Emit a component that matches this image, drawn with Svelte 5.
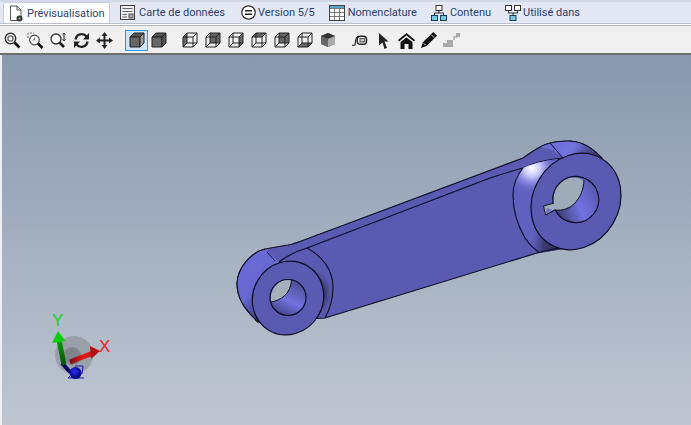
<script>
  // tabs along the top, labels in the order shown
  const tabs = [
    { id: 'preview', label: 'Prévisualisation', active: true },
    { id: 'card', label: 'Carte de données' },
    { id: 'version', label: 'Version 5/5' },
    { id: 'bom', label: 'Nomenclature' },
    { id: 'content', label: 'Contenu' },
    { id: 'used', label: 'Utilisé dans' }
  ];

  // shaded face of each wireframe view cube
  const wireCubes = [
    'M1 5 5 1 5 11 1 15Z',
    'M5 1H15V11H5Z',
    'M11 5 15 1 15 11 11 15Z',
    'M1 5 5 1H15L11 5Z',
    'M5 1H15V11H5Z',
    'M5 11H15L11 15H1Z'
  ];

  const leftCrescent = 'M307 248C322 256 333 270 333 287 333 298 330 309 325 318L300 332 279 262C287 256 296 251 307 248Z';
  const rightCrescent = 'M523 168C515 178 513 186 513 195 513 212 518 226 525 238 529 244 534 249 540 253L575 247 575 158C555 158 536 162 523 168Z';
</script>

{#snippet tabIcon(id)}
  {#if id === 'preview'}
    <svg width="14" height="17" viewBox="0 0 14 17">
      <path d="M1.5 1H8L12 5V15.5H1.5Z" fill="#fff" stroke="#555" />
      <path d="M8 1V5H12" fill="none" stroke="#555" />
      <circle cx="10.5" cy="13.5" r="3" fill="#333" />
      <circle cx="10.5" cy="13.5" r="1" fill="#bbb" />
    </svg>
  {:else if id === 'card'}
    <svg width="15" height="15" viewBox="0 0 15 15">
      <rect x=".5" y=".5" width="14" height="14" fill="#eef0f4" stroke="#444" />
      <path d="M2.500 3.500H12.500M2.500 6.500H12.500M2.500 9.500H7M2.500 12H7" stroke="#666" />
      <rect x="9" y="9" width="4" height="4" fill="#aaa" stroke="#555" />
    </svg>
  {:else if id === 'version'}
    <svg width="15" height="15" viewBox="0 0 15 15">
      <circle cx="7.5" cy="7.5" r="6.7" fill="#fff" stroke="#333" stroke-width="1.3" />
      <path d="M4 5.800H11M4 9.200H11" stroke="#222" stroke-width="1.5" />
    </svg>
  {:else if id === 'bom'}
    <svg width="16" height="16" viewBox="0 0 16 16">
      <rect x=".5" y=".5" width="15" height="15" fill="#fff" stroke="#444" />
      <rect x="1" y="1" width="14" height="2.5" fill="#5ba3cf" />
      <path d="M1 7.500H15M1 11.500H15M5.500 3.500V15M10.500 3.500V15M1 3.500H15" stroke="#777" />
    </svg>
  {:else if id === 'content'}
    <svg width="16" height="16" viewBox="0 0 16 16">
      <rect x="5" y=".5" width="6" height="5" fill="#fff" stroke="#333" />
      <rect x=".5" y="10.5" width="6" height="5" fill="#7cc4e4" stroke="#12405f" />
      <rect x="9.5" y="10.5" width="6" height="5" fill="#7cc4e4" stroke="#12405f" />
      <path d="M8 5.500V8M3.500 10.500V8H12.500V10.500" fill="none" stroke="#333" />
    </svg>
  {:else}
    <svg width="16" height="16" viewBox="0 0 16 16">
      <rect x=".5" y=".5" width="6" height="5" fill="#fff" stroke="#333" />
      <rect x="9.5" y=".5" width="6" height="5" fill="#fff" stroke="#333" />
      <rect x="5" y="10.5" width="6" height="5" fill="#7cc4e4" stroke="#12405f" />
      <path d="M3.500 5.500V8H12.500V5.500M8 8V10.500" fill="none" stroke="#333" />
    </svg>
  {/if}
{/snippet}

{#snippet solidCube(side)}
  <svg width="16" height="16" viewBox="0 0 16 16">
    <path d="M1 5 5 1H15L11 5Z" fill="#555" stroke="#222" stroke-linejoin="round" />
    <path d="M1 5H11V15H1Z" fill="#666" stroke="#222" stroke-linejoin="round" />
    <path d="M11 5 15 1V11L11 15Z" fill={side} stroke="#222" stroke-linejoin="round" />
  </svg>
{/snippet}

<div class="window">
  <nav class="tabs">
    {#each tabs as tab}
      <div class="tab {tab.id}" class:active={tab.active}>
        {@render tabIcon(tab.id)}
        <span>{tab.label}</span>
      </div>
    {/each}
  </nav>

  <div class="toolbar">
    <div class="group view-tools">
      <svg width="17" height="17" viewBox="0 0 17 17">
        <circle cx="6.5" cy="6.5" r="5.2" fill="#fff" stroke="#333" stroke-width="1.4" />
        <circle cx="6.5" cy="6.5" r="2.6" fill="none" stroke="#666" stroke-width="1.4" />
        <path d="M10.500 10.500 15.500 15.500" stroke="#111" stroke-width="2.6" />
      </svg>
      <svg width="17" height="17" viewBox="0 0 17 17">
        <path d="M1 6V1H7" fill="none" stroke="#666" stroke-dasharray="2 1.4" />
        <circle cx="7.5" cy="8" r="4.8" fill="#fff" stroke="#444" stroke-width="1.2" />
        <path d="M7.500 5.500V8H5.500" fill="none" stroke="#777" />
        <path d="M11 11.500 15.500 16" stroke="#111" stroke-width="2.6" />
      </svg>
      <svg width="17" height="17" viewBox="0 0 17 17">
        <circle cx="6" cy="7" r="5" fill="#fff" stroke="#333" stroke-width="1.3" />
        <path d="M9.700 10.700 14 15" stroke="#111" stroke-width="2.6" />
        <path d="M14 1V9M12.600 2.800 14 1 15.400 2.800M12.600 7.200 14 9 15.400 7.200" fill="none" stroke="#333" />
      </svg>
      <svg width="17" height="17" viewBox="0 0 17 17">
        <path d="M2.500 7.500A6.200 6.200 0 0 1 13.500 4.500" fill="none" stroke="#222" stroke-width="2.3" />
        <path d="M14.500 9.500A6.200 6.200 0 0 1 3.500 12.500" fill="none" stroke="#222" stroke-width="2.3" />
        <path d="M16 1V7.500H10ZM1 16V9.500H7Z" fill="#222" />
      </svg>
      <svg width="17" height="17" viewBox="0 0 17 17">
        <path d="M8.500 2V15M2 8.500H15" stroke="#222" stroke-width="2" />
        <path d="M8.500 0 11.500 4H5.500ZM8.500 17 5.500 13H11.500ZM0 8.500 4 5.500V11.500ZM17 8.500 13 11.500V5.500Z" fill="#222" />
      </svg>
    </div>

    <div class="selected">{@render solidCube('#999')}</div>
    <div class="second-cube">{@render solidCube('#555')}</div>

    <div class="group cubes">
      {#each wireCubes as face}
        <svg width="16" height="16" viewBox="0 0 16 16">
          <path d={face} fill="#666" />
          <path
            d="M1 5 5 1H15V11L11 15H1ZM1 5H11V15M11 5 15 1M5 1V11M5 11 1 15M5 11H15"
            fill="none"
            stroke="#222"
            stroke-linejoin="round"
          />
        </svg>
      {/each}
      <svg width="16" height="16" viewBox="0 0 16 16">
        <path d="M8 1 15 4V12L8 15 1 12V4Z" fill="#555" />
        <path d="M1 4 8 1 15 4 8 7Z" fill="#333" />
        <path d="M8 7 15 4V12L8 15Z" fill="#aaa" />
        <path d="M1 4 8 7V15L1 12Z" fill="#666" />
      </svg>
    </div>

    <div class="group misc-tools">
      <svg class="tape" width="16" height="15" viewBox="0 0 17 16">
        <rect x="5.500" y="3.500" width="10" height="8.500" rx="3.500" fill="none" stroke="#222" stroke-width="1.500" />
        <rect x="8.500" y="6" width="5" height="3.500" fill="#ccc" stroke="#444" />
        <path d="M7 3.500C3 4 4 11 3 13H0" fill="none" stroke="#222" stroke-width="1.200" />
      </svg>
      <svg class="arrow" width="11" height="17" viewBox="0 0 11 17">
        <path d="M1 1 10.500 9.500H6.500L9 16 6.500 17 4.500 10.500 1 13.500Z" fill="#222" />
      </svg>
      <svg class="home" width="17" height="17" viewBox="0 0 17 17">
        <path d="M0 8 8.500 1 17 8 16 9.500 8.500 3.500 1 9.500Z" fill="#111" />
        <path d="M2.500 10 8.500 5.500 14.500 10V17H10.500V12H6.500V17H2.500Z" fill="#111" />
      </svg>
      <svg class="pencil" width="16" height="16" viewBox="0 0 17 17">
        <path d="M13 0 17 4 6 15 0 17 2 11Z" fill="#111" />
        <path d="M11 3 14 6M3 12 5 14" stroke="#f0f0f0" />
      </svg>
      <svg class="steps" width="17" height="14" viewBox="0 0 17 14">
        <path d="M0 14V10H4V7H10V14Z" fill="#aaa" />
        <path d="M11 7V4H14" fill="none" stroke="#aaa" stroke-width="1.300" />
        <rect x="13" y="0" width="4" height="4" fill="#aaa" />
      </svg>
    </div>
  </div>

  <main class="viewport">
    <svg class="scene" width="689" height="370" viewBox="2 55 689 370">
      <defs>
        <linearGradient id="leftBoss" x1="0" y1="0" x2=".55" y2="1">
          <stop offset="0" stop-color="#6d6dd8" />
          <stop offset=".6" stop-color="#6767d0" />
          <stop offset="1" stop-color="#363670" />
        </linearGradient>
        <radialGradient id="leftShade" gradientUnits="userSpaceOnUse" cx="308" cy="294" r="27">
          <stop offset="0" stop-color="#2c2c52" />
          <stop offset=".6" stop-color="#34345f" />
          <stop offset="1" stop-color="#5a5ab2" stop-opacity="0" />
        </radialGradient>
        <radialGradient id="rightGlow" gradientUnits="userSpaceOnUse" cx="532" cy="168" r="24">
          <stop offset="0" stop-color="#fff" />
          <stop offset=".35" stop-color="#c8c8fa" />
          <stop offset="1" stop-color="#7a7ae4" stop-opacity="0" />
        </radialGradient>
        <radialGradient id="rightShade" gradientUnits="userSpaceOnUse" cx="558" cy="246" r="30">
          <stop offset="0" stop-color="#2a2a50" />
          <stop offset=".5" stop-color="#3c3c74" />
          <stop offset="1" stop-color="#5a5ab2" stop-opacity="0" />
        </radialGradient>
        <linearGradient id="topCyl" x1="0" y1="0" x2="1" y2=".3">
          <stop offset="0" stop-color="#6a6ad2" />
          <stop offset=".55" stop-color="#7474e0" />
          <stop offset="1" stop-color="#30305c" />
        </linearGradient>
        <linearGradient id="smallBore" x1=".2" y1="1" x2=".7" y2="0">
          <stop offset="0" stop-color="#3d3d7c" />
          <stop offset=".45" stop-color="#7272e0" />
          <stop offset="1" stop-color="#4c4c94" />
        </linearGradient>
        <linearGradient id="largeBore" x1="0" y1=".8" x2="1" y2=".4">
          <stop offset="0" stop-color="#33335f" />
          <stop offset=".55" stop-color="#7373e2" />
          <stop offset="1" stop-color="#5858b0" />
        </linearGradient>
        <radialGradient id="ball" cx=".4" cy=".35" r=".7">
          <stop offset="0" stop-color="#2a2af0" />
          <stop offset="1" stop-color="#00006a" />
        </radialGradient>
        <linearGradient id="yShaft" x1="0" y1="1" x2="0" y2="0">
          <stop offset="0" stop-color="#0a4f0a" />
          <stop offset="1" stop-color="#0aa80a" />
        </linearGradient>
        <linearGradient id="xShaft" x1="0" y1="0" x2="1" y2="0">
          <stop offset="0" stop-color="#7a1010" />
          <stop offset=".6" stop-color="#f01818" />
          <stop offset="1" stop-color="#c01010" />
        </linearGradient>
      </defs>

      <!-- arm body -->
      <path
        d="M265 249C275 247 282 246 288 245 298 243 308 238 320 234L523 158C530 153 536 149 540 147 547 143 556 141 570 141 585 142 594 150 602 158L600 200 537 253 325 318 258 322C243 308 237 297 237 283 238 268 250 253 265 249Z"
        fill="#5a5ab2"
        stroke="#0b0b20"
        stroke-width="1.100"
        stroke-linejoin="round"
      />

      <!-- top flat of the arm -->
      <path d="M279 262C287 256 296 251 307 248L490 178C502 174 512 171 523 168 536 162 550 159 563 158" fill="none" stroke="#0b0b20" stroke-width="1.100" />

      <!-- rear boss top, right end -->
      <path d="M540 147C547 143 556 141 570 141 585 142 594 150 602 158L600 170 563 158 553 150Z" fill="url(#topCyl)" />
      <path d="M550 143 563 158M540 147C547 143 556 141 570 141 585 142 594 150 602 158" fill="none" stroke="#0b0b20" stroke-width="1" />

      <!-- small boss -->
      <path d="M265 249C250 253 238 268 237 283 237 297 243 308 258 322L262 290 279 262Z" fill="url(#leftBoss)" />
      <path d="M265 249C250 253 238 268 237 283 237 297 243 308 258 322" fill="none" stroke="#0b0b20" stroke-width="1.100" />
      <path d="M267 252 275 261" stroke="#0b0b20" stroke-width=".9" />
      <path d={leftCrescent} fill="url(#leftShade)" />
      <path d="M307 248C322 256 333 270 333 287 333 298 330 309 325 318" fill="none" stroke="#0b0b20" stroke-width="1.100" />
      <ellipse cx="288" cy="298" rx="37.500" ry="35" transform="rotate(-59 288 298)" fill="#5a5ab2" stroke="#0b0b20" stroke-width="1.200" />
      <circle cx="288" cy="297.500" r="18" fill="url(#smallBore)" />
      <path d="M270.500 302C280 301 291 294 291.500 280 282 277 270 286 270.500 302Z" fill="#a5afbb" />
      <path d="M270.500 302C280 301 291 294 291.500 280" fill="none" stroke="#0b0b20" stroke-width="1" />
      <circle cx="288" cy="297.500" r="18" fill="none" stroke="#0b0b20" stroke-width="1.200" />

      <!-- large boss -->
      <path d={rightCrescent} fill="#6060c0" />
      <path d={rightCrescent} fill="url(#rightShade)" />
      <path d={rightCrescent} fill="url(#rightGlow)" />
      <path d="M523 168C515 178 513 186 513 195 513 212 518 226 525 238 529 244 534 249 540 253" fill="none" stroke="#0b0b20" stroke-width="1.100" />
      <path d="M537 253C550 249 558 248 567 247" fill="none" stroke="#0b0b20" stroke-width="1.100" />
      <ellipse cx="576" cy="201.500" rx="50" ry="43" transform="rotate(-59 576 201.500)" fill="#5a5ab2" stroke="#0b0b20" stroke-width="1.200" />
      <circle cx="576" cy="200" r="23" fill="url(#largeBore)" />
      <path d="M553 203 543 206 545 215 553 210C565 212 582 205 584 181 578 176 568 176 560 183 555 188 553 197 553 203Z" fill="#a0abb9" />
      <path d="M545.500 214 552 210 547 208Z" fill="#6f6fd6" />
      <path d="M554 203 543.500 206 545.500 215 555 210C570 212 583 200 584 180" fill="none" stroke="#0b0b20" stroke-width="1" />
      <path d="M553 203A23 23 0 1 1 555 209.500" fill="none" stroke="#0b0b20" stroke-width="1.200" />

      <!-- axis triad -->
      <circle cx="74" cy="355" r="19" fill="#555" opacity=".28" />
      <circle cx="72" cy="356" r="9" fill="#444" opacity=".3" />
      <path d="M62 363 69 371 78 376" stroke="#05055a" stroke-width="4" fill="none" />
      <path d="M75 366H83L82 374M70 376 68 378 84 378" stroke="#1a1ab0" stroke-width="1" fill="none" />
      <circle cx="75.500" cy="373" r="6" fill="url(#ball)" />
      <path d="M64 365 58.500 337" stroke="url(#yShaft)" stroke-width="5" />
      <path d="M58 331 65.500 341 52 343Z" fill="#0ccf0c" />
      <path d="M70 362 93 353" stroke="url(#xShaft)" stroke-width="5" />
      <path d="M100 351 91 359 90 346Z" fill="#b81010" />
      <text x="52" y="326" class="axis y">Y</text>
      <text x="99" y="352" class="axis x">X</text>
    </svg>
  </main>
</div>

<style>
  :global(body) {
    margin: 0;
    overflow: hidden;
  }

  .window {
    display: flex;
    flex-direction: column;
    width: 691px;
    height: 425px;
    background: #f0f0f0;
    font-family: Roboto, "Noto Sans", sans-serif;
  }

  .tabs {
    display: flex;
    align-items: flex-end;
    height: 24px;
    padding-left: 3px;
    box-sizing: border-box;
    background: #e3e8f4;
    border-top: 2px solid #d3d8e6;
    border-bottom: 1px solid #b9bfcc;
  }

  .tab {
    display: flex;
    align-items: center;
    gap: 3px;
    height: 21px;
    padding: 0 7px;
    font-size: 11px;
    color: #2b3f6e;
    white-space: nowrap;
  }

  .tab.active {
    flex: 0 0 107px;
    gap: 4px;
    padding: 0 2px 0 5px;
    background: #fff;
    border: 1px solid #c6ccda;
    border-bottom: none;
    border-radius: 2px 2px 0 0;
    box-sizing: border-box;
    margin-right: 3px;
  }

  .tab.card {
    gap: 4px;
    padding-right: 9px;
  }

  .tab.version,
  .tab.used {
    gap: 2px;
  }

  .toolbar {
    display: flex;
    align-items: center;
    height: 31px;
    box-sizing: border-box;
    padding: 3px 0 1px 4px;
    border-top: 1px solid #fff;
    border-bottom: 2px solid #6e6e6e;
    box-shadow: inset 0 1px 0 #b4b4b4;
  }

  .group {
    display: flex;
    align-items: center;
  }

  .view-tools {
    gap: 6px;
    margin-right: 12px;
  }

  .selected {
    display: flex;
    align-items: center;
    justify-content: center;
    width: 23px;
    height: 21px;
    box-sizing: border-box;
    background: #cfe6f8;
    border: 1px solid #2f9bd6;
  }

  .second-cube {
    display: flex;
    margin: 0 15px 0 3px;
  }

  .cubes {
    gap: 7px;
    margin-right: 16px;
  }

  .arrow {
    margin: 0 9px 0 10px;
  }

  .pencil {
    margin: 0 6px;
  }

  .viewport {
    flex: 1;
    margin-left: 2px;
    background: linear-gradient(180deg, #8999ae 0%, #bfc6d2 100%);
    overflow: hidden;
  }

  .scene {
    display: block;
  }

  .axis {
    font-family: "Liberation Sans", sans-serif;
    font-size: 17px;
    font-weight: 400;
  }

  .axis.y {
    fill: #16d016;
  }

  .axis.x {
    fill: #ee2222;
  }
</style>
